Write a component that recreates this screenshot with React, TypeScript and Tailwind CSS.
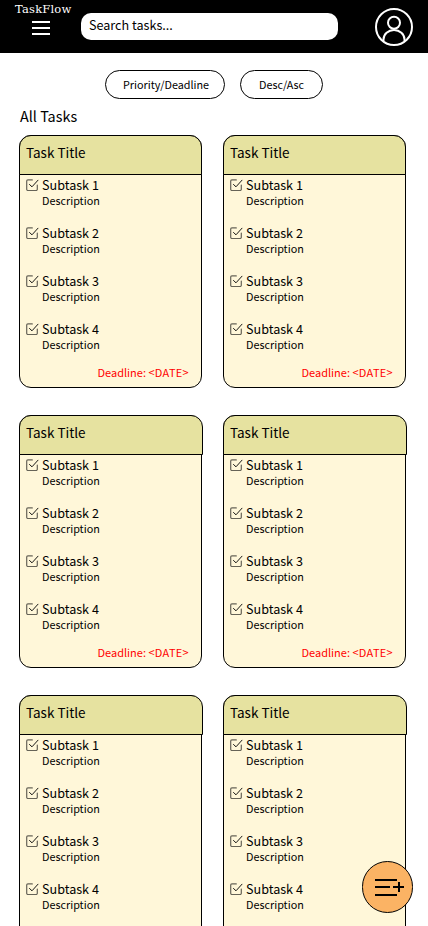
const SUBTASKS = [1, 2, 3, 4];

function CheckIcon() {
  return (
    <svg className="-mt-px h-4 w-4 shrink-0" viewBox="0 0 16 16" fill="none" stroke="#000" strokeLinecap="round">
      <path d="M8.3 2.9H3.9a1.2 1.2 0 0 0-1.2 1.2v8.2a1.2 1.2 0 0 0 1.2 1.2h8.2a1.2 1.2 0 0 0 1.2-1.2V8" strokeOpacity=".6" strokeWidth="1.2" />
      <path d="m5.5 7.5 2.5 2.3 6-6.6" strokeWidth=".9" />
    </svg>
  );
}

function TaskCard({ wide }: { wide: boolean }) {
  return (
    <article className="h-[253px] w-[183px] rounded-[12px] border border-black bg-[#fff7d9]">
      <header
        className={`-ml-px -mt-px h-10 rounded-t-[12px] border border-black bg-[#e6e2a0] pl-1.5 pt-1 text-[13.5px] leading-6 ${wide ? "w-[184px]" : "w-[183px]"}`}
      >
        Task Title
      </header>
      <ul>
        {SUBTASKS.map((n) => (
          <li key={n} className="flex h-12 pl-1 pt-[3px]">
            <CheckIcon />
            <div className="-mt-px pl-0.5">
              <div className="text-[12.6px] leading-4">Subtask {n}</div>
              <div className="text-[10.8px] leading-[14px]">Description</div>
            </div>
          </li>
        ))}
      </ul>
      <p className="-mt-[3px] pr-3 text-right text-[11px] leading-4 text-[#ff0000]">
        Deadline: <span className="tracking-[0.3px]">&lt;DATE&gt;</span>
      </p>
    </article>
  );
}

export default function App() {
  return (
    <div className="relative h-[926px] w-[428px] overflow-hidden bg-white font-['Noto_Sans_CJK_SC',sans-serif] text-black">
      <header className="flex h-[53px] bg-black">
        <div className="w-[81px] pl-[15px] text-white">
          <div className="pt-[1px] font-['DejaVu_Serif',serif] text-[11.5px] leading-4 tracking-[0.2px]">TaskFlow</div>
          <button className="ml-[17px] mt-[4px] flex w-[18px] flex-col gap-1" aria-label="Menu">
            <span className="h-0.5 w-full bg-white" />
            <span className="h-0.5 w-full bg-white" />
            <span className="h-0.5 w-full bg-white" />
          </button>
        </div>
        <div className="mt-[13px] h-[27px] w-[257px] rounded-[10px] bg-white pl-2 text-[12.6px] leading-[23px]">
          Search tasks...
        </div>
        <svg className="ml-[37px] mt-2 h-[38px] w-[38px]" viewBox="0 0 38 38" fill="none" stroke="#fff" strokeWidth="2">
          <circle cx="19" cy="19" r="18" />
          <circle cx="19" cy="14.7" r="6" />
          <path d="M8.5 33v-1.5a10.5 9.5 0 0 1 21 0V33" />
        </svg>
      </header>
      <div className="flex gap-[15px] pl-[105px] pt-[17px] text-[10.8px] leading-[26px]">
        <button className="h-[29px] w-[120px] rounded-full border border-black pb-0.5 pl-[17px] text-left">Priority/Deadline</button>
        <button className="h-[29px] w-[83px] rounded-full border border-black pb-0.5 pl-[18px] text-left">Desc/Asc</button>
      </div>
      <h1 className="pl-5 pt-[5px] text-[14.4px] leading-6">All Tasks</h1>
      <main className="grid grid-cols-[183px_183px] gap-x-[21px] gap-y-[27px] pl-[19px] pt-[7px]">
        {[0, 1, 2, 3, 4, 5].map((i) => (
          <TaskCard key={i} wide={i > 1} />
        ))}
      </main>
      <button
        className="absolute left-[362px] top-[861px] h-[52px] w-[51px] rounded-full border border-black bg-[#fbb364]"
        aria-label="Add task"
      >
        <svg className="h-full w-full" viewBox="0 0 49 50" fill="none" stroke="#000" strokeWidth="2">
          <path d="M12 18h22M12 25h15M12 33h22M30 25h11M36 20v10" />
        </svg>
      </button>
    </div>
  );
}
